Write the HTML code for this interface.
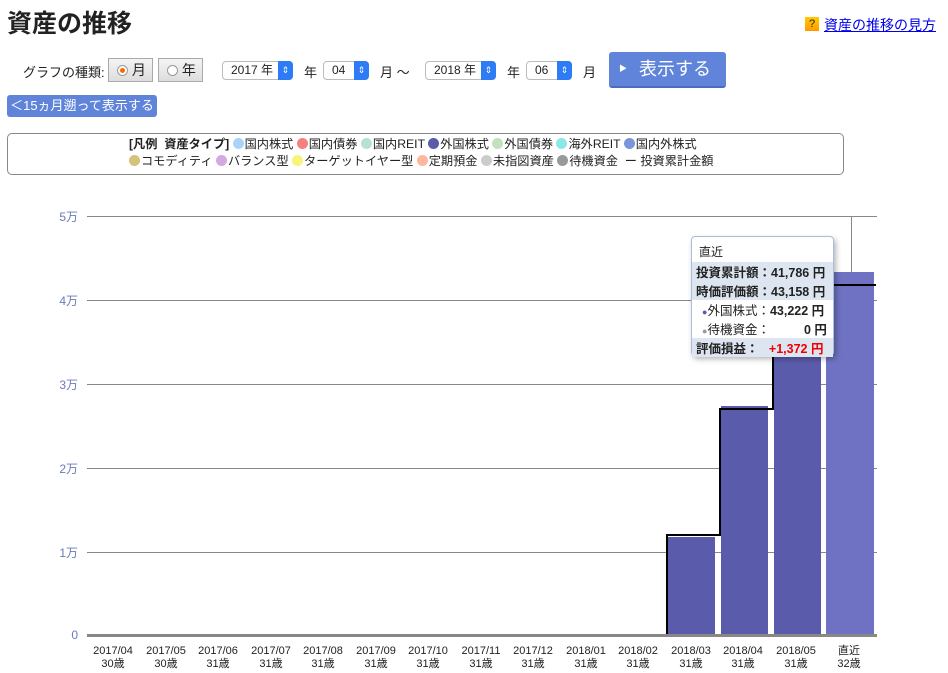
<!DOCTYPE html>
<html><head><meta charset="utf-8">
<style>
*{margin:0;padding:0;box-sizing:border-box}
body{width:948px;height:673px;background:#fff;font-family:"Liberation Sans","Noto Sans CJK JP",sans-serif;color:#222;position:relative;overflow:hidden}
.a{position:absolute;white-space:nowrap}
h1{position:absolute;left:7px;top:4px;font-size:25px;font-weight:bold;color:#222}
.sel{position:absolute;height:19px;border:1px solid #bbb;border-radius:4px;background:#fff;font-size:12px;line-height:17px;padding-left:8px}
.sel i{position:absolute;right:-1px;top:-1px;width:15px;height:19px;background:#2d7cf5;border-radius:0 4px 4px 0;color:#fff;font-style:normal;font-size:9px;text-align:center;line-height:19px}
.rb{position:absolute;top:58px;height:24px;border:1px solid #aaa;background:linear-gradient(#f4f4f4,#ddd);font-size:14px;line-height:22px;padding-left:8px}
.dot{display:inline-block;width:11px;height:11px;border-radius:50%;vertical-align:-1px;margin-right:1px}
.yl{position:absolute;left:48px;width:30px;text-align:right;font-size:12px;color:#6a7ab8}
.gl{position:absolute;left:87px;width:790px;height:1px;background:#888}
.xl{position:absolute;top:645px;width:60px;text-align:center;font-size:11px;line-height:13px;color:#222}
.bar{position:absolute;background:#5a5bab}
.tr td{padding:0 4px;font-size:12.5px;font-weight:bold;height:19px}
</style></head><body>
<h1>資産の推移</h1>
<div class="a" style="left:805px;top:17px;width:14px;height:14px;background:linear-gradient(#fc0,#f90);font-size:11px;text-align:center;line-height:14px">?</div>
<div class="a" style="left:824px;top:15px;font-size:14px;color:#00e;text-decoration:underline">資産の推移の見方</div>

<div class="a" style="left:23px;top:62px;font-size:13px">グラフの種類:</div>
<div class="rb" style="left:108px;width:45px"><span style="display:inline-block;width:11px;height:11px;border:1px solid #999;border-radius:50%;background:#fff;vertical-align:-1px;position:relative"><span style="position:absolute;left:2px;top:2px;width:5px;height:5px;border-radius:50%;background:#f60"></span></span> 月</div>
<div class="rb" style="left:158px;width:45px"><span style="display:inline-block;width:11px;height:11px;border:1px solid #999;border-radius:50%;background:#fff;vertical-align:-1px"></span> 年</div>
<div class="sel" style="left:222px;top:61px;width:71px">2017 年<i>⇕</i></div>
<div class="a" style="left:304px;top:62px;font-size:13px">年</div>
<div class="sel" style="left:323px;top:61px;width:46px">04<i>⇕</i></div>
<div class="a" style="left:380px;top:62px;font-size:13px">月 〜</div>
<div class="sel" style="left:425px;top:61px;width:71px">2018 年<i>⇕</i></div>
<div class="a" style="left:507px;top:62px;font-size:13px">年</div>
<div class="sel" style="left:526px;top:61px;width:46px">06<i>⇕</i></div>
<div class="a" style="left:583px;top:62px;font-size:13px">月</div>
<div class="a" style="left:609px;top:52px;width:117px;height:36px;background:#5f84d9;border-radius:3px;border-bottom:2px solid #4a6cbd;color:#fff;font-size:18px;line-height:34px;padding-left:30px"><span style="position:absolute;left:10px;font-size:8px">▶</span>表示する</div>
<div class="a" style="left:7px;top:95px;width:150px;height:22px;background:#5f84d9;border-radius:3px;color:#fff;font-size:13px;line-height:22px;text-align:center">＜15ヵ月遡って表示する</div>

<div class="a" style="left:7px;top:133px;width:837px;height:42px;border:1px solid #888;border-radius:5px"></div>
<div class="a" style="left:129px;top:136px;font-size:12.2px;line-height:17px">
<b>[凡例&nbsp; 資産タイプ]</b> <span class="dot" style="background:#a8d4fb"></span>国内株式 <span class="dot" style="background:#f87f80"></span>国内債券 <span class="dot" style="background:#b6e2cf"></span>国内REIT <span class="dot" style="background:#5a5bab"></span>外国株式 <span class="dot" style="background:#c5e0bf"></span>外国債券 <span class="dot" style="background:#8be8e4"></span>海外REIT <span class="dot" style="background:#7b95d8"></span>国内外株式<br>
<span class="dot" style="background:#d6c27a"></span>コモディティ <span class="dot" style="background:#d3a8e3"></span>バランス型 <span class="dot" style="background:#f6f47a"></span>ターゲットイヤー型 <span class="dot" style="background:#fdb79c"></span>定期預金 <span class="dot" style="background:#ccc"></span>未指図資産 <span class="dot" style="background:#999"></span>待機資金 &nbsp;ー 投資累計金額</div>

<div class="gl" style="top:216px"></div><div class="gl" style="top:300px"></div><div class="gl" style="top:384px"></div><div class="gl" style="top:468px"></div><div class="gl" style="top:552px"></div>
<div class="yl" style="top:208px">5万</div><div class="yl" style="top:292px">4万</div><div class="yl" style="top:376px">3万</div><div class="yl" style="top:460px">2万</div><div class="yl" style="top:544px">1万</div><div class="yl" style="top:628px">0</div>
<div class="a" style="left:851px;top:216px;width:1px;height:56px;background:#888"></div>

<div class="bar" style="left:668px;top:537px;width:47px;height:98px"></div>
<div class="bar" style="left:721px;top:406px;width:47px;height:229px"></div>
<div class="bar" style="left:774px;top:276px;width:47px;height:359px"></div>
<div class="bar" style="left:826px;top:272px;width:48px;height:363px;background:#6f72c2"></div>
<svg class="a" style="left:0;top:0" width="948" height="673"><polyline points="667,636 667,535 720,535 720,409 773,409 773,285 876,285" fill="none" stroke="#000" stroke-width="2"/></svg>
<div class="a" style="left:87px;top:634px;width:790px;height:3px;background:#888"></div>

<div class="a" style="left:691px;top:236px;width:143px;height:120px;background:#fff;border:1px solid #a8bedc;border-radius:4px;box-shadow:2px 3px 6px rgba(0,0,0,.3)">
<div style="font-size:12px;padding:6px 0 0 7px;height:25px">直近</div>
<table class="tr" style="border-collapse:collapse;width:100%;margin-top:0">
<tr style="background:#dde6f0"><td>投資累計額：41,786 円</td></tr>
<tr style="background:#dde6f0"><td>時価評価額：43,158 円</td></tr>
<tr><td style="font-weight:normal;padding-left:10px"><span style="color:#5a5bab;font-size:9px">●</span>外国株式：<b>43,222 円</b></td></tr>
<tr><td style="font-weight:normal;padding-left:10px"><span style="color:#999;font-size:9px">●</span>待機資金：<b style="margin-left:34px">0 円</b></td></tr>
<tr style="background:#dde6f0"><td>評価損益：&nbsp;&nbsp;&nbsp;<span style="color:#e00">+1,372 円</span></td></tr>
</table></div>

<div class="xl" style="left:83px">2017/04<br>30歳</div>
<div class="xl" style="left:136px">2017/05<br>30歳</div>
<div class="xl" style="left:188px">2017/06<br>31歳</div>
<div class="xl" style="left:241px">2017/07<br>31歳</div>
<div class="xl" style="left:293px">2017/08<br>31歳</div>
<div class="xl" style="left:346px">2017/09<br>31歳</div>
<div class="xl" style="left:398px">2017/10<br>31歳</div>
<div class="xl" style="left:451px">2017/11<br>31歳</div>
<div class="xl" style="left:503px">2017/12<br>31歳</div>
<div class="xl" style="left:556px">2018/01<br>31歳</div>
<div class="xl" style="left:608px">2018/02<br>31歳</div>
<div class="xl" style="left:661px">2018/03<br>31歳</div>
<div class="xl" style="left:713px">2018/04<br>31歳</div>
<div class="xl" style="left:766px">2018/05<br>31歳</div>
<div class="xl" style="left:819px">直近<br>32歳</div>
</body></html>
